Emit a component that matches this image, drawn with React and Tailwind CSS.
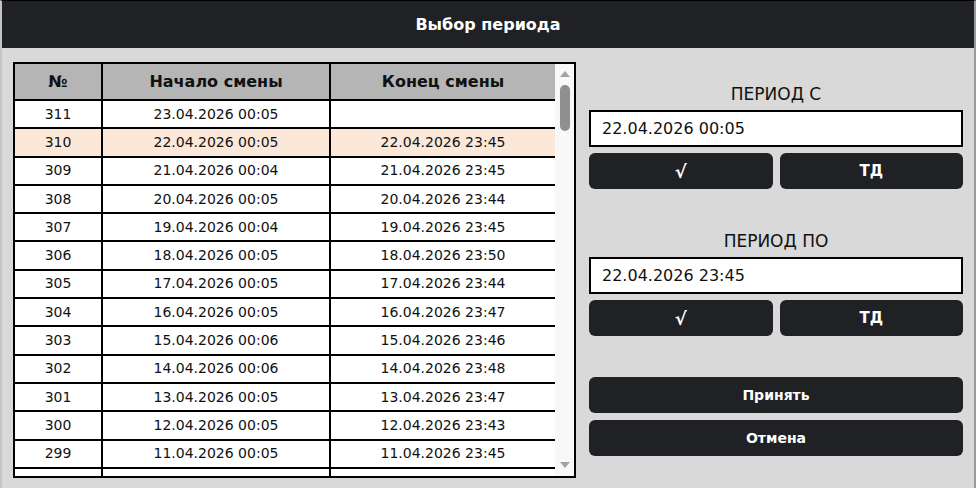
import React from "react";

const rows = [
  ["311", "23.04.2026 00:05", ""],
  ["310", "22.04.2026 00:05", "22.04.2026 23:45"],
  ["309", "21.04.2026 00:04", "21.04.2026 23:45"],
  ["308", "20.04.2026 00:05", "20.04.2026 23:44"],
  ["307", "19.04.2026 00:04", "19.04.2026 23:45"],
  ["306", "18.04.2026 00:05", "18.04.2026 23:50"],
  ["305", "17.04.2026 00:05", "17.04.2026 23:44"],
  ["304", "16.04.2026 00:05", "16.04.2026 23:47"],
  ["303", "15.04.2026 00:06", "15.04.2026 23:46"],
  ["302", "14.04.2026 00:06", "14.04.2026 23:48"],
  ["301", "13.04.2026 00:05", "13.04.2026 23:47"],
  ["300", "12.04.2026 00:05", "12.04.2026 23:43"],
  ["299", "11.04.2026 00:05", "11.04.2026 23:45"],
  // строка под краем прокрутки, текст не виден
  ["", "", ""],
];

const font = { fontFamily: '"DejaVu Sans", "Noto Sans", sans-serif' };

function DarkButton({ children, className = "" }) {
  return (
    <button
      className={
        "flex h-[36px] items-center justify-center rounded-[6px] bg-[#1f2124] font-bold text-white " +
        className
      }
    >
      {children}
    </button>
  );
}

function PeriodBlock({ label, value, className = "" }) {
  return (
    <div className={"flex flex-col " + className}>
      <div className="h-[20px] text-center text-[17px] leading-[20px] text-[#111]">
        {label}
      </div>
      <div className="mt-[6px] flex h-[37px] items-center border-2 border-black bg-white pl-[11px] text-[16px] text-[#111]">
        {value}
      </div>
      <div className="mt-[6px] flex gap-[7px]">
        <DarkButton className="flex-1 text-[18px]">√</DarkButton>
        <DarkButton className="flex-1 text-[15px]">ТД</DarkButton>
      </div>
    </div>
  );
}

export default function App() {
  return (
    <div
      className="flex h-[488px] w-[976px] flex-col overflow-hidden border-t border-r-2 border-t-black border-r-[#9a9a9a] border-l-2 border-l-[#c4c4c4] bg-[#d9d9d9]"
      style={font}
    >
      {/* Заголовок */}
      <div className="flex h-[47px] shrink-0 items-center justify-center bg-[#1f2124] text-[16px] font-bold text-white">
        Выбор периода
      </div>

      <div className="flex flex-1 pt-[14px] pl-[11px] pr-[11px]">
        {/* Таблица смен */}
        <div className="flex h-[416px] w-[563px] border-2 border-black bg-white">
          <div className="flex w-[540px] flex-col overflow-hidden">
            <div className="flex h-[37px] shrink-0 border-b-2 border-black bg-[#b4b5b4] text-[16px] font-bold text-[#111]">
              <div className="flex w-[88px] items-center justify-center border-r-2 border-black">
                №
              </div>
              <div className="flex w-[228px] items-center justify-center border-r-2 border-black">
                Начало смены
              </div>
              <div className="flex flex-1 items-center justify-center">
                Конец смены
              </div>
            </div>
            {rows.map((r, i) => (
              <div
                key={i}
                className={
                  "flex h-[28.3px] shrink-0 border-b-2 border-black text-[14px] text-[#111] " +
                  (r[0] === "310" ? "bg-[#fce8d9]" : "bg-white")
                }
              >
                <div className="flex w-[88px] items-center justify-center border-r-2 border-black">
                  {r[0]}
                </div>
                <div className="flex w-[228px] items-center justify-center border-r-2 border-black">
                  {r[1]}
                </div>
                <div className="flex flex-1 items-center justify-center">
                  {r[2]}
                </div>
              </div>
            ))}
          </div>

          {/* Полоса прокрутки */}
          <div className="flex w-[19px] flex-col items-center bg-[#f8f8f8]">
            <svg width="12" height="8" viewBox="0 0 12 8" className="mt-[6px]">
              <path d="M6 1 L11 7 L1 7 Z" fill="#a3a3a3" />
            </svg>
            <div className="mt-[7px] h-[46px] w-[10px] rounded-full bg-[#8f8f8f]" />
            <div className="flex-1" />
            <svg width="12" height="8" viewBox="0 0 12 8" className="mb-[7px]">
              <path d="M1 1 L11 1 L6 7 Z" fill="#a3a3a3" />
            </svg>
          </div>
        </div>

        {/* Панель периода */}
        <div className="ml-[13px] flex w-[374px] flex-col">
          <PeriodBlock label="ПЕРИОД С" value="22.04.2026 00:05" className="mt-[22px]" />
          <PeriodBlock label="ПЕРИОД ПО" value="22.04.2026 23:45" className="mt-[42px]" />
          <DarkButton className="mt-[41px] text-[14px]">Принять</DarkButton>
          <DarkButton className="mt-[7px] text-[14px]">Отмена</DarkButton>
        </div>
      </div>
    </div>
  );
}
